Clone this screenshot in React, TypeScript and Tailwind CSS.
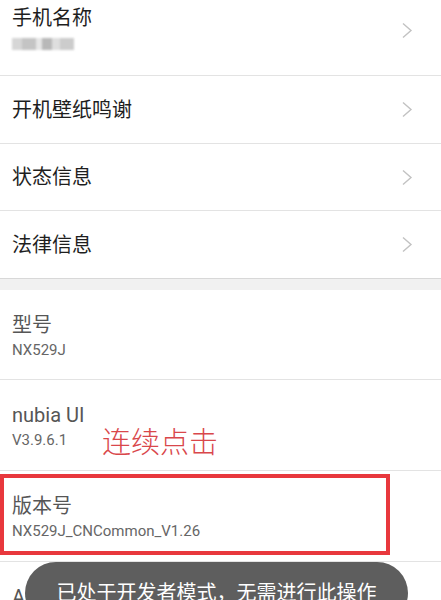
import React from 'react';

const font = { fontFamily: 'Roboto, "Noto Sans CJK SC", sans-serif' };

const Chevron: React.FC = () => (
  <svg width="12" height="17" viewBox="0 0 12 17" className="shrink-0">
    <polyline points="2,1.5 10,8.5 2,15.5" fill="none" stroke="#c2c2c2" strokeWidth="1.4" />
  </svg>
);

// rows with a chevron on the right
const NavRow: React.FC<{ title: string; h: string }> = ({ title, h }) => (
  <div className={`${h} flex items-center justify-between pl-3 pr-[28px] border-b border-[#e3e3e3]`}>
    <span className="text-[20px] leading-[28px] text-[#1e1e1e]">{title}</span>
    <Chevron />
  </div>
);

const InfoRow: React.FC<{ label: string; value?: string; children?: React.ReactNode; h?: string }> = ({
  label,
  value,
  children,
  h = 'h-[91px]',
}) => (
  <div className={`${h} relative pl-3 pt-[21px] border-b border-[#e3e3e3]`}>
    <div className="text-[20px] leading-[28px] text-[#565656]">{label}</div>
    {value && <div className="mt-[1px] text-[15px] leading-[20px] text-[#666]">{value}</div>}
    {children}
  </div>
);

export default function App() {
  return (
    <div className="relative h-[600px] w-[441px] overflow-hidden bg-white" style={font}>
      {/* 手机名称 */}
      <div className="h-[76px] flex items-start justify-between pl-3 pr-[28px] border-b border-[#e3e3e3]">
        <div className="pt-[4px]">
          <div className="text-[20px] leading-[28px] text-[#1e1e1e]">手机名称</div>
          <div className="mt-[6px] flex h-[12px] w-[62px] blur-[1px]">
            <div className="w-[10px] bg-[#d6d6d6]" />
            <div className="w-[14px] bg-[#c4c4c4]" />
            <div className="w-[6px] bg-[#e6e6e6]" />
            <div className="w-[10px] bg-[#b8b8b8]" />
            <div className="w-[8px] bg-[#dedede]" />
            <div className="w-[14px] bg-[#cccccc]" />
          </div>
        </div>
        <div className="mt-[22px]">
          <Chevron />
        </div>
      </div>
      <NavRow title="开机壁纸鸣谢" h="h-[68px]" />
      <NavRow title="状态信息" h="h-[67px]" />
      <div className="h-[68px] flex items-center justify-between pl-3 pr-[28px] border-b border-[#d8d8d8]">
        <span className="text-[20px] leading-[28px] text-[#1e1e1e]">法律信息</span>
        <Chevron />
      </div>

      {/* section gap */}
      <div className="h-[11px] bg-[#f1f1f1]" />

      <InfoRow label="型号" value="NX529J" h="h-[90px]" />
      <InfoRow label="nubia UI" value="V3.9.6.1">
        <span className="absolute left-[102px] top-[43px] text-[29px] font-light leading-[40px] text-[#d9474b]">
          连续点击
        </span>
      </InfoRow>
      <InfoRow label="版本号" value="NX529J_CNCommon_V1.26">
        <div className="absolute left-0 top-[3px] h-[81px] w-[390px] border-[4px] border-[#e8383d]" />
      </InfoRow>
      <InfoRow label="Android 版本" value="7.1.1" />

      {/* toast */}
      <div className="absolute left-[25px] top-[562px] flex h-[62px] w-[383px] items-center justify-center rounded-full bg-[#5e5e5e]">
        <span className="text-[20px] leading-[28px] text-white">已处于开发者模式，无需进行此操作</span>
      </div>
    </div>
  );
}
